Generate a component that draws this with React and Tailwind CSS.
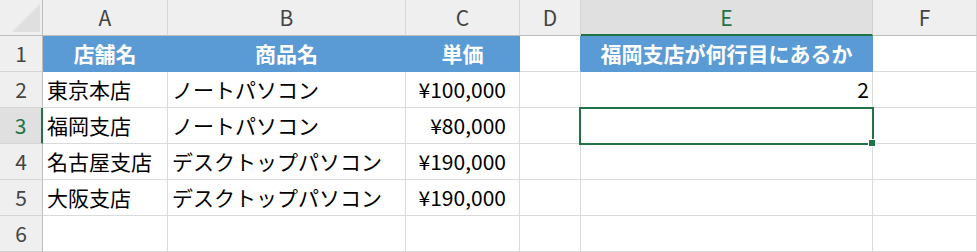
import React from 'react';

// column widths include the 1px gridline on the right
const COLS = ['A', 'B', 'C', 'D', 'E', 'F'];

const rows = [
    { n: 2, a: '東京本店', b: 'ノートパソコン', c: '¥100,000', e: '2' },
    { n: 3, a: '福岡支店', b: 'ノートパソコン', c: '¥80,000', e: '' },
    { n: 4, a: '名古屋支店', b: 'デスクトップパソコン', c: '¥190,000', e: '' },
    { n: 5, a: '大阪支店', b: 'デスクトップパソコン', c: '¥190,000', e: '' },
    { n: 6, a: '', b: '', c: '', e: '' },
];

const cell = 'flex items-center border-r border-b border-[#dadada] bg-white text-black';
const blue = 'flex items-center justify-center border-r border-b border-[#5b9bd5] bg-[#5b9bd5] text-white font-bold';

function App() {
    return (
        <div
            className="relative w-[977px] h-[252px] overflow-hidden bg-white text-[21px] leading-none"
            style={{ fontFamily: '"Noto Sans CJK JP", "Noto Sans", sans-serif' }}
        >
            <div className="grid grid-cols-[43px_125px_238px_114px_61px_292px_104px] grid-rows-[36px_36px_36px_36px_36px_36px_36px]">
                {/* corner */}
                <div className="relative bg-[#efefef] border-r border-b border-[#bdbdbd]">
                    <svg className="absolute left-[12px] top-[4px]" width="28" height="28" viewBox="0 0 28 28">
                        <polygon points="28,0 28,28 0,28" fill="#dfdfdf" />
                    </svg>
                </div>
                {/* column headers */}
                {COLS.map(c => (
                    <div
                        key={c}
                        className={
                            c === 'E'
                                ? 'flex items-center justify-center bg-[#e0e0e0] border-r border-[#d0d0d0] border-b-2 border-b-[#217346] text-[#217346]'
                                : 'flex items-center justify-center bg-[#efefef] border-r border-[#d5d5d5] border-b border-b-[#bdbdbd] text-[#444]'
                        }
                    >
                        {c}
                    </div>
                ))}

                {/* row 1: table header */}
                <div className="flex items-center justify-center bg-[#efefef] border-r border-r-[#bdbdbd] border-b border-b-[#d5d5d5] text-[#444]">1</div>
                <div className={blue}>店舗名</div>
                <div className={blue}>商品名</div>
                <div className={blue}>単価</div>
                <div className="border-r border-r-[#5b9bd5] border-b border-b-[#dadada] bg-white"></div>
                <div className={blue}>福岡支店が何行目にあるか</div>
                <div className={cell}></div>

                {rows.map(r => (
                    <React.Fragment key={r.n}>
                        <div
                            className={
                                r.n === 3
                                    ? 'flex items-center justify-center bg-[#e0e0e0] border-r-2 border-r-[#217346] border-b border-b-[#d5d5d5] text-[#217346]'
                                    : 'flex items-center justify-center bg-[#efefef] border-r border-r-[#bdbdbd] border-b border-b-[#d5d5d5] text-[#444]'
                            }
                        >
                            {r.n}
                        </div>
                        <div className={`${cell} pl-1 whitespace-nowrap`}>{r.a}</div>
                        <div className={`${cell} pl-1 whitespace-nowrap`}>{r.b}</div>
                        <div className={`${cell} justify-end pr-[13px]`}>{r.c}</div>
                        <div className={cell}></div>
                        <div className={`${cell} justify-end pr-[3px]`}>{r.e}</div>
                        <div className={cell}></div>
                    </React.Fragment>
                ))}
            </div>

            {/* active cell E3 */}
            <div className="absolute left-[579px] top-[107px] w-[295px] h-[38px] border-2 border-[#217346]"></div>
            <div className="absolute left-[868px] top-[139px] w-[8px] h-[8px] bg-[#217346] border border-white"></div>
        </div>
    );
}

export default App;
